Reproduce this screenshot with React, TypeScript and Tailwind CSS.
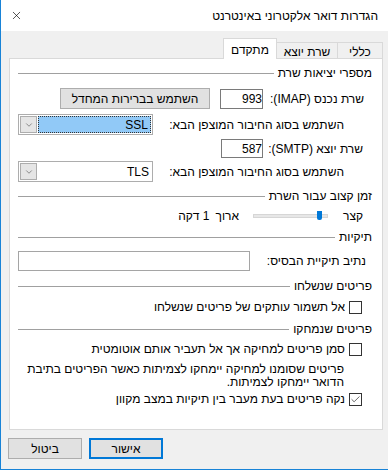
import { Check, ChevronDown, X } from 'lucide-react';

const SectionHeader = ({ title, className = '' }: { title: string; className?: string }) => (
  <div className={`h-[20px] flex items-center gap-[4px] pr-[10px] pl-[8px] ${className}`}>
    <span className="whitespace-nowrap">{title}</span>
    <div className="flex-1 h-px bg-[#a0a0a0]" />
  </div>
);

const NumberBox = ({ value, className = '' }: { value: string; className?: string }) => (
  <div
    className={`border border-[#7a7a7a] bg-white flex items-center justify-end pl-[4px] ${className}`}
    dir="ltr"
  >
    {value}
  </div>
);

const Combo = ({ value, focused }: { value: string; focused?: boolean }) => (
  <div className="w-[135px] h-[21px] border border-[#adadad] bg-white flex items-center p-[1px] gap-[1px]" dir="ltr">
    <div className="w-[17px] h-[17px] bg-[#e5e5e5] border border-[#adadad] flex items-center justify-center shrink-0">
      <ChevronDown className="w-[10px] h-[10px] text-[#555]" strokeWidth={1.5} />
    </div>
    <div
      className={`flex-1 h-[17px] flex items-center justify-end pr-[2px] ${
        focused ? 'bg-[#91c9f7] border border-dotted border-[#333]' : ''
      }`}
    >
      {value}
    </div>
  </div>
);

const CheckRow = ({ label, checked, className = '' }: { label: string; checked?: boolean; className?: string }) => (
  <div className={`h-[20px] flex items-center gap-[4px] pr-[20px] ${className}`}>
    <div className="w-[13px] h-[13px] border border-[#333] bg-white flex items-center justify-center shrink-0">
      {checked && <Check className="w-[11px] h-[11px] text-[#333]" strokeWidth={1.6} />}
    </div>
    <span className="whitespace-nowrap">{label}</span>
  </div>
);

export default function App() {
  return (
    <div
      dir="rtl"
      className="w-[388px] h-[470px] bg-[#f0f0f0] border-l border-b border-[#1883d7] flex flex-col font-['Liberation_Sans','DejaVu_Sans',sans-serif] text-[12px] leading-none text-black"
    >
      {/* title bar */}
      <div className="h-[31px] bg-white flex items-center justify-between pr-[10px] pl-[9px] shrink-0">
        <span className="text-[12px]">הגדרות דואר אלקטרוני באינטרנט</span>
        <X className="w-[13px] h-[13px] text-black" strokeWidth={1.2} />
      </div>

      {/* tabs */}
      <div className="mt-[7px] h-[20px] flex items-end pr-[5px] shrink-0">
        <div className="w-[46px] h-[16px] border-t border-x border-[#d9d9d9] bg-[#f0f0f0] flex items-center justify-center pt-[2px]">
          כללי
        </div>
        <div className="w-[60px] h-[16px] border-t border-[#d9d9d9] bg-[#f0f0f0] flex items-center justify-center pt-[2px]">
          שרת יוצא
        </div>
        <div className="relative z-10 w-[54px] h-[21px] -mb-px border-t border-x border-[#d9d9d9] bg-white flex items-start justify-center pt-[5px]">
          מתקדם
        </div>
      </div>

      {/* panel */}
      <div className="ml-[8px] mr-[5px] h-[372px] border border-[#d9d9d9] bg-white flex flex-col shrink-0">
        <SectionHeader title="מספרי יציאות שרת" className="mt-[4px]" />

        <div className="mt-[5px] h-[21px] flex items-center pr-[18px]">
          <div className="w-[101px] whitespace-nowrap">שרת נכנס (IMAP):</div>
          <NumberBox value="993" className="w-[43px] h-[20px]" />
          <button className="mr-[10px] w-[150px] h-[21px] bg-[#e1e1e1] border border-[#adadad] flex items-center justify-center">
            השתמש בברירות המחדל
          </button>
        </div>

        <div className="mt-[5px] h-[21px] flex items-center pr-[38px]">
          <div className="w-[191px] whitespace-nowrap">השתמש בסוג החיבור המוצפן הבא:</div>
          <Combo value="SSL" focused />
        </div>

        <div className="mt-[4px] h-[19px] flex items-center pr-[19px]">
          <div className="w-[100px] whitespace-nowrap">שרת יוצא (SMTP):</div>
          <NumberBox value="587" className="w-[42px] h-[19px]" />
        </div>

        <div className="mt-[3px] h-[21px] flex items-center pr-[38px]">
          <div className="w-[191px] whitespace-nowrap">השתמש בסוג החיבור המוצפן הבא:</div>
          <Combo value="TLS" />
        </div>

        <SectionHeader title="זמן קצוב עבור השרת" className="mt-[4px]" />

        <div className="h-[20px] flex items-center pr-[19px]">
          <div className="w-[35px]">קצר</div>
          <div className="relative w-[75px] h-[4px] bg-[#e7e7e7] border border-[#d6d6d6]" dir="ltr">
            <div className="absolute right-[5px] -top-[4px] w-[5px] h-[9px] bg-[#0078d7] rounded-b-[2px]" />
          </div>
          <div className="mr-[14px]">ארוך</div>
          <div className="mr-[6px]">1 דקה</div>
        </div>

        <SectionHeader title="תיקיות" className="mt-[1px]" />

        <div className="mt-[4px] h-[20px] flex items-center pr-[16px]">
          <div className="w-[116px] whitespace-nowrap">נתיב תיקיית הבסיס:</div>
          <div className="w-[232px] h-[20px] border border-[#a5a5a5] bg-white" />
        </div>

        <SectionHeader title="פריטים שנשלחו" className="mt-[5px]" />
        <CheckRow label="אל תשמור עותקים של פריטים שנשלחו" className="mt-[1px]" />

        <SectionHeader title="פריטים שנמחקו" className="mt-[2px]" />
        <CheckRow label="סמן פריטים למחיקה אך אל תעביר אותם אוטומטית" />

        <div className="mt-[4px] pr-[38px] leading-[13px] whitespace-nowrap">
          פריטים שסומנו למחיקה יימחקו לצמיתות כאשר הפריטים בתיבת
          <br />
          הדואר יימחקו לצמיתות.
        </div>

        <CheckRow label="נקה פריטים בעת מעבר בין תיקיות במצב מקוון" checked />
      </div>

      {/* footer buttons */}
      <div className="mt-[8px] h-[21px] flex justify-end gap-[7px] pl-[7px] shrink-0">
        <button className="w-[74px] h-[21px] bg-[#e1e1e1] border-2 border-[#0078d7] flex items-center justify-center">
          אישור
        </button>
        <button className="w-[74px] h-[21px] bg-[#e1e1e1] border border-[#adadad] flex items-center justify-center">
          ביטול
        </button>
      </div>
    </div>
  );
}
